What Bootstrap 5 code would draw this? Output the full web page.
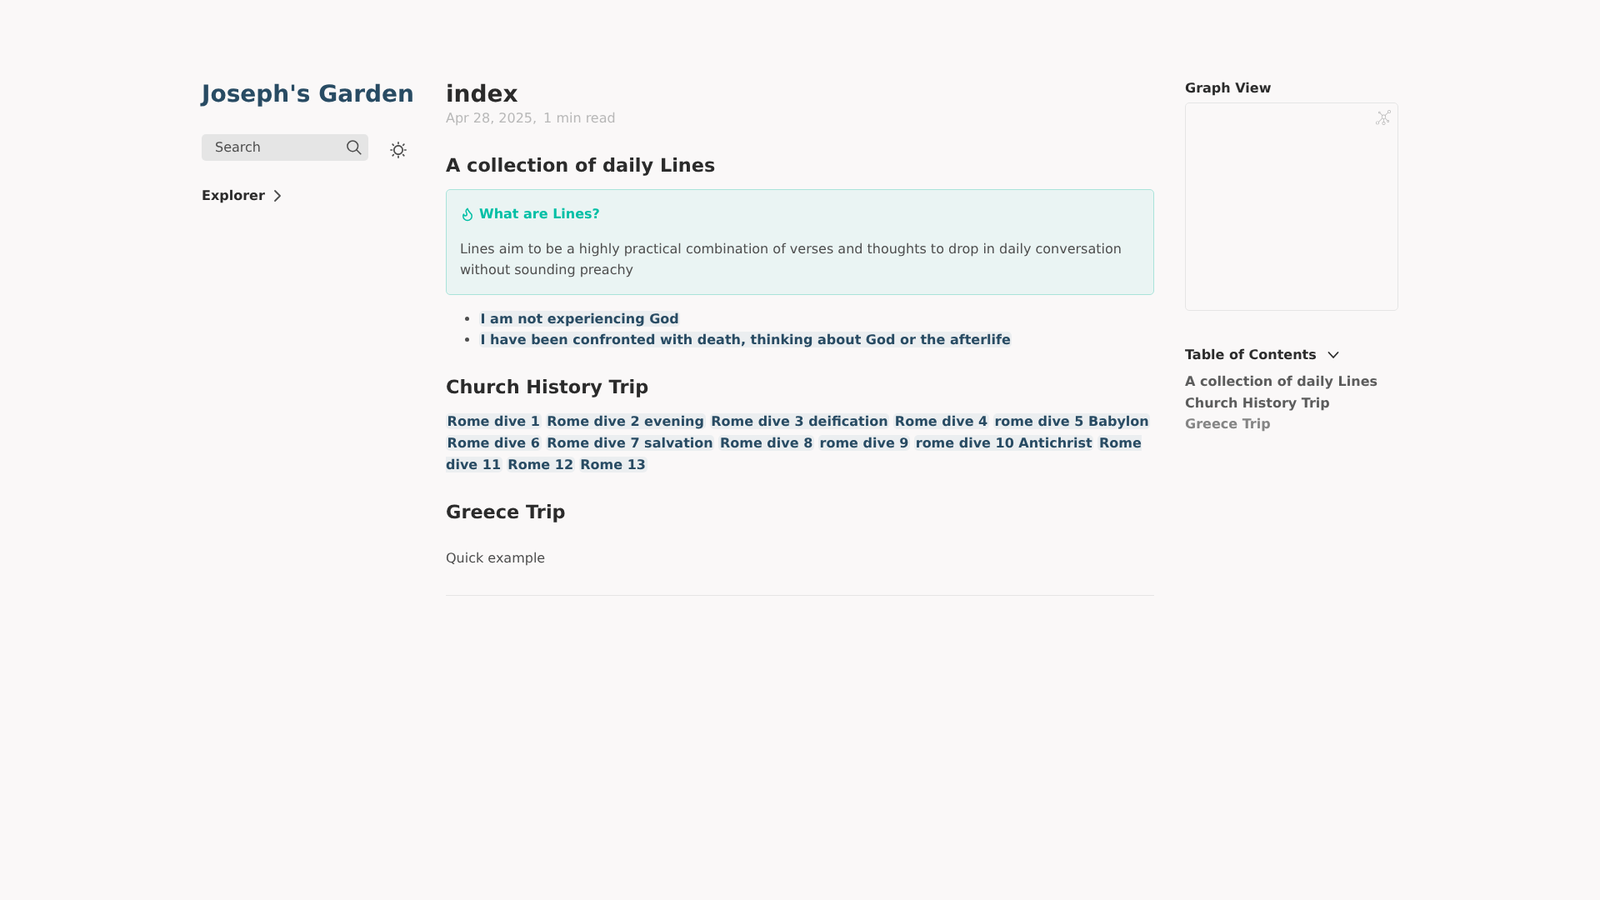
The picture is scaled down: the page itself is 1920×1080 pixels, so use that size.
<!doctype html>
<html lang="en">
<head>
<meta charset="utf-8">
<title>index</title>
<link href="https://cdn.jsdelivr.net/npm/bootstrap@5.3.0/dist/css/bootstrap.min.css" rel="stylesheet">
<style>
html,body{background:#faf8f8;min-height:100vh}
body{font-family:"DejaVu Sans",sans-serif;font-size:16px;line-height:1.6;color:#4e4e4e;text-rendering:geometricPrecision}
.shell{padding:97px 0 0 242px;will-change:transform}
.leftcol{width:293px;flex:none}
.maincol{width:850px;flex:none}
.rightcol{width:256px;flex:none;margin-left:37px;margin-top:-4px}
.sitetitle{font-size:28px;font-weight:700;color:#284b63;line-height:32px;margin:0;white-space:nowrap}
.searchbox{width:200px;height:32px;background:#e5e5e5;border-radius:5px;color:#4e4e4e;padding:0 8px 0 16px}
.searchrow{margin-top:32px}
.sunbtn{margin-left:26px;margin-top:9px;color:#4e4e4e;fill:currentColor}
.explorerhd{margin-top:29px;color:#2b2b2b;font-weight:700;line-height:26px}
.pagetitle{font-size:28px;font-weight:700;color:#2b2b2b;line-height:32px;margin:0}
.metaline{color:#b8b8b8;line-height:26px;margin:0}
.metagap{margin-left:8px}
.sect{font-size:22.4px;font-weight:700;color:#2b2b2b;line-height:30px;margin:0}
.sect1{margin-top:29px}
.calloutbox{margin-top:13px;background:#eaf4f3;border:1px solid #a9e3da;border-radius:5px;padding:16px;height:127px}
.callouthd{color:#00bfa5;font-weight:700;line-height:26px}
.calloutico{margin-right:5px}
.calloutbox p{margin:16px 0 0;line-height:25px}
.lineslist{margin:15.6px 0 0;padding-left:40px}
.lineslist li{line-height:25.6px}
a.wikilink{color:#284b63;font-weight:700;text-decoration:none;background:#ebeef0;border-radius:5px;padding:0 1.6px}
.sect2{margin-top:29.4px}
.linkpara{margin:13px 0 0;line-height:25.9px}
.sect3{margin-top:29px}
.quick{margin:27px 0 0}
.rulebar{margin:32px 0 0;border:0;border-top:1px solid #e5e5e5;opacity:1}
.sidehd{color:#2b2b2b;font-weight:700;line-height:26px;margin:0}
.graphbox{margin-top:4px;height:250px;border:1px solid #e5e5e5;border-radius:5px;position:relative}
.graphicon{position:absolute;top:8px;right:8px;color:#b0b0b0;fill:currentColor}
.tochd{margin-top:40px;color:#2b2b2b;font-weight:700;line-height:26px}
.tocchev{margin-left:13px}
.tocitems{margin:6px 0 0;padding:0;list-style:none;font-weight:700;line-height:25.6px}
.tocfirst{color:#5c5c5c}
.toclast{color:#858585}
</style>
</head>
<body>
<div class="shell d-flex align-items-start">
  <aside class="leftcol">
    <h2 class="sitetitle">Joseph's Garden</h2>
    <div class="d-flex align-items-start searchrow">
      <div class="searchbox d-flex align-items-center justify-content-between">
        <span>Search</span>
        <svg width="18" height="18" viewBox="0 0 19.900 19.700" fill="none" stroke="currentColor" stroke-width="1.700"><path stroke-linecap="square" d="M18.500 18.300l-5.400-5.400"/><circle cx="8" cy="8" r="7"/></svg>
      </div>
      <svg class="sunbtn" width="20" height="20" viewBox="0 0 35 35"><path d="M6,17.500C6,16.672,5.328,16,4.500,16h-3C0.672,16,0,16.672,0,17.500 S0.672,19,1.500,19h3C5.328,19,6,18.328,6,17.500z M7.500,26c-0.414,0-0.789,0.168-1.061,0.439l-2,2C4.168,28.711,4,29.086,4,29.500 C4,30.328,4.671,31,5.500,31c0.414,0,0.789-0.168,1.060-0.440l2-2C8.832,28.289,9,27.914,9,27.500C9,26.672,8.329,26,7.500,26z M17.500,6 C18.329,6,19,5.328,19,4.500v-3C19,0.672,18.329,0,17.500,0S16,0.672,16,1.500v3C16,5.328,16.671,6,17.500,6z M27.500,9 c0.414,0,0.789-0.168,1.060-0.439l2-2C30.832,6.289,31,5.914,31,5.500C31,4.672,30.329,4,29.500,4c-0.414,0-0.789,0.168-1.061,0.440 l-2,2C26.168,6.711,26,7.086,26,7.500C26,8.328,26.671,9,27.500,9z M6.439,8.561C6.711,8.832,7.086,9,7.500,9C8.328,9,9,8.328,9,7.500 c0-0.414-0.168-0.789-0.439-1.061l-2-2C6.289,4.168,5.914,4,5.500,4C4.672,4,4,4.672,4,5.500c0,0.414,0.168,0.789,0.439,1.060 L6.439,8.561z M33.500,16h-3c-0.828,0-1.500,0.672-1.500,1.500s0.672,1.500,1.500,1.500h3c0.828,0,1.500-0.672,1.500-1.500S34.328,16,33.500,16z M28.561,26.439C28.289,26.168,27.914,26,27.500,26c-0.828,0-1.500,0.672-1.500,1.500c0,0.414,0.168,0.789,0.439,1.060l2,2 C28.711,30.832,29.086,31,29.500,31c0.828,0,1.500-0.672,1.500-1.500c0-0.414-0.168-0.789-0.439-1.061L28.561,26.439z M17.500,29 c-0.829,0-1.500,0.672-1.500,1.500v3c0,0.828,0.671,1.500,1.500,1.500s1.500-0.672,1.500-1.500v-3C19,29.672,18.329,29,17.500,29z M17.500,7 C11.710,7,7,11.710,7,17.500S11.710,28,17.500,28S28,23.290,28,17.500S23.290,7,17.500,7z M17.500,25c-4.136,0-7.500-3.364-7.500-7.500 c0-4.136,3.364-7.500,7.500-7.500c4.136,0,7.500,3.364,7.500,7.500C25,21.636,21.636,25,17.500,25z"/></svg>
    </div>
    <div class="explorerhd d-flex align-items-center">
      <span>Explorer</span>
      <svg class="ms-2" width="14" height="16" viewBox="0 0 14 16" fill="none" stroke="#4e4e4e" stroke-width="1.8" stroke-linecap="round" stroke-linejoin="round"><path d="M4 2l6 6-6 6"/></svg>
    </div>
  </aside>
  <main class="maincol">
    <h1 class="pagetitle">index</h1>
    <p class="metaline">Apr 28, 2025,<span class="metagap">1 min read</span></p>
    <h2 class="sect sect1">A collection of daily Lines</h2>
    <div class="calloutbox">
      <div class="callouthd d-flex align-items-center">
        <svg class="calloutico" width="18" height="18" viewBox="0 0 24 24" fill="none" stroke="currentColor" stroke-width="2" stroke-linecap="round" stroke-linejoin="round"><path d="M8.500 14.500A2.500 2.500 0 0 0 11 12c0-1.380-.5-2-1-3-1.072-2.143-.224-4.054 2-6 .5 2.500 2 4.900 4 6.500 2 1.600 3 3.500 3 5.500a7 7 0 1 1-14 0c0-1.153.433-2.294 1-3a2.500 2.500 0 0 0 2.500 2.500z"/></svg>
        <span>What are Lines?</span>
      </div>
      <p>Lines aim to be a highly practical combination of verses and thoughts to drop in daily conversation without sounding preachy</p>
    </div>
    <ul class="lineslist">
      <li><a class="wikilink" href="#">I am not experiencing God</a></li>
      <li><a class="wikilink" href="#">I have been confronted with death, thinking about God or the afterlife</a></li>
    </ul>
    <h2 class="sect sect2">Church History Trip</h2>
    <p class="linkpara"><a class="wikilink" href="#">Rome dive 1</a> <a class="wikilink" href="#">Rome dive 2 evening</a> <a class="wikilink" href="#">Rome dive 3 deification</a> <a class="wikilink" href="#">Rome dive 4</a> <a class="wikilink" href="#">rome dive 5 Babylon</a> <a class="wikilink" href="#">Rome dive 6</a> <a class="wikilink" href="#">Rome dive 7 salvation</a> <a class="wikilink" href="#">Rome dive 8</a> <a class="wikilink" href="#">rome dive 9</a> <a class="wikilink" href="#">rome dive 10 Antichrist</a> <a class="wikilink" href="#">Rome dive 11</a> <a class="wikilink" href="#">Rome 12</a> <a class="wikilink" href="#">Rome 13</a></p>
    <h2 class="sect sect3">Greece Trip</h2>
    <p class="quick">Quick example</p>
    <hr class="rulebar">
  </main>
  <aside class="rightcol">
    <h3 class="sidehd fs-6 fw-bold">Graph View</h3>
    <div class="graphbox">
      <svg class="graphicon" width="18" height="18" viewBox="0 0 55 55"><path d="M49,0c-3.309,0-6,2.691-6,6c0,1.035,0.263,2.009,0.726,2.860l-9.829,9.829C32.542,17.634,30.846,17,29,17 s-3.542,0.634-4.898,1.688l-7.669-7.669C16.785,10.424,17,9.740,17,9c0-2.206-1.794-4-4-4S9,6.794,9,9s1.794,4,4,4 c0.740,0,1.424-0.215,2.019-0.567l7.669,7.669C21.634,21.458,21,23.154,21,25s0.634,3.542,1.688,4.897L10.024,42.562 C8.958,41.595,7.549,41,6,41c-3.309,0-6,2.691-6,6s2.691,6,6,6s6-2.691,6-6c0-1.035-0.263-2.009-0.726-2.860l12.829-12.829 c1.106,0.860,2.440,1.436,3.898,1.619v10.160c-2.833,0.478-5,2.942-5,5.910c0,3.309,2.691,6,6,6s6-2.691,6-6c0-2.967-2.167-5.431-5-5.910 v-10.160c1.458-0.183,2.792-0.759,3.898-1.619l7.669,7.669C41.215,39.576,41,40.260,41,41c0,2.206,1.794,4,4,4s4-1.794,4-4 s-1.794-4-4-4c-0.740,0-1.424,0.215-2.019,0.567l-7.669-7.669C36.366,28.542,37,26.846,37,25s-0.634-3.542-1.688-4.897l9.665-9.665 C46.042,11.405,47.451,12,49,12c3.309,0,6-2.691,6-6S52.309,0,49,0z M11,9c0-1.103,0.897-2,2-2s2,0.897,2,2s-0.897,2-2,2 S11,10.103,11,9z M6,51c-2.206,0-4-1.794-4-4s1.794-4,4-4s4,1.794,4,4S8.206,51,6,51z M33,49c0,2.206-1.794,4-4,4s-4-1.794-4-4 s1.794-4,4-4S33,46.794,33,49z M29,31c-3.309,0-6-2.691-6-6s2.691-6,6-6s6,2.691,6,6S32.309,31,29,31z M47,41c0,1.103-0.897,2-2,2 s-2-0.897-2-2s0.897-2,2-2S47,39.897,47,41z M49,10c-2.206,0-4-1.794-4-4s1.794-4,4-4s4,1.794,4,4S51.206,10,49,10z"/></svg>
    </div>
    <div class="tochd d-flex align-items-center">
      <span>Table of Contents</span>
      <svg class="tocchev" width="14" height="10" viewBox="0 0 14 10" fill="none" stroke="#2b2b2b" stroke-width="1.800" stroke-linecap="round" stroke-linejoin="round"><path d="M1.500 2l5.500 6 5.500-6"/></svg>
    </div>
    <ul class="tocitems">
      <li class="tocfirst">A collection of daily Lines</li>
      <li class="tocfirst">Church History Trip</li>
      <li class="toclast">Greece Trip</li>
    </ul>
  </aside>
</div>
<script src="https://cdn.jsdelivr.net/npm/bootstrap@5.3.0/dist/js/bootstrap.bundle.min.js"></script>
</body>
</html>
